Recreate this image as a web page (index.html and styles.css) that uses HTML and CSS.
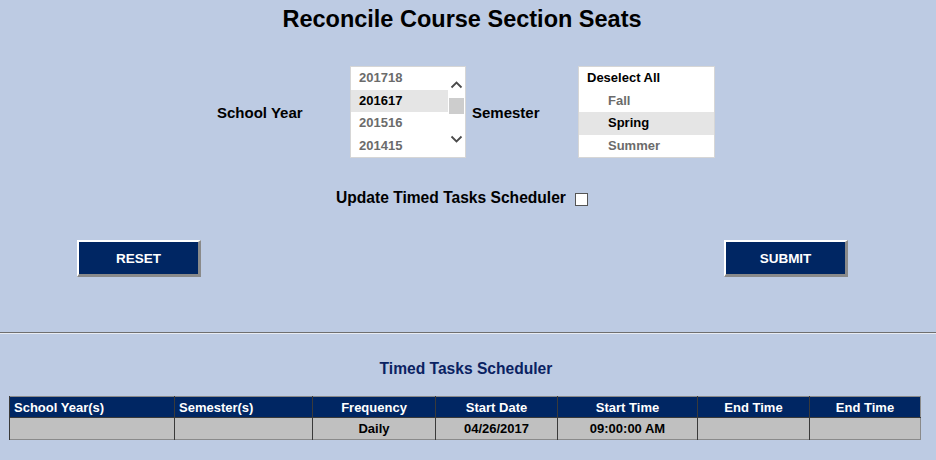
FILE: index.html
```html
<!DOCTYPE html>
<html>
<head>
<meta charset="utf-8">
<title>Reconcile Course Section Seats</title>
<link rel="stylesheet" href="styles.css">
</head>
<body>
<h1 class="title">Reconcile Course Section Seats</h1>

<div class="selectors">
  <div class="sel-label first">School Year</div>
  <div class="listbox years">
    <div class="options">
      <div class="opt">201718</div>
      <div class="opt selected">201617</div>
      <div class="opt">201516</div>
      <div class="opt">201415</div>
    </div>
    <div class="scrollbar">
      <svg class="arrow" width="17" height="12" viewBox="0 0 17 12"><path d="M3.5 8.5 L8.5 3.5 L13.5 8.5" fill="none" stroke="#4a4a4a" stroke-width="1.8"/></svg>
      <div class="track"><div class="thumb"></div></div>
      <svg class="arrow" width="17" height="12" viewBox="0 0 17 12"><path d="M3.5 3.5 L8.5 8.5 L13.5 3.5" fill="none" stroke="#4a4a4a" stroke-width="1.8"/></svg>
    </div>
  </div>
  <div class="sel-label second">Semester</div>
  <div class="listbox semesters">
    <div class="opt dark">Deselect All</div>
    <div class="opt indent">Fall</div>
    <div class="opt indent selected">Spring</div>
    <div class="opt indent">Summer</div>
  </div>
</div>

<div class="check-row">
  <span class="check-label">Update Timed Tasks Scheduler</span>
  <span class="checkbox"></span>
</div>

<div class="buttons">
  <button class="btn">RESET</button>
  <button class="btn">SUBMIT</button>
</div>

<div class="divider"></div>

<h2 class="sched-title">Timed Tasks Scheduler</h2>

<table class="sched">
  <colgroup>
    <col style="width:165px"><col style="width:138px"><col style="width:123px"><col style="width:122px"><col style="width:140px"><col style="width:112px"><col style="width:111px">
  </colgroup>
  <thead>
    <tr>
      <th class="left">School Year(s)</th>
      <th class="left">Semester(s)</th>
      <th>Frequency</th>
      <th>Start Date</th>
      <th>Start Time</th>
      <th>End Time</th>
      <th>End Time</th>
    </tr>
  </thead>
  <tbody>
    <tr>
      <td></td>
      <td></td>
      <td>Daily</td>
      <td>04/26/2017</td>
      <td>09:00:00 AM</td>
      <td></td>
      <td></td>
    </tr>
  </tbody>
</table>
</body>
</html>
```

FILE: styles.css
```css
html, body {
  margin: 0;
  padding: 0;
}
body {
  background: #bdcbe3;
  font-family: "Liberation Sans", Arial, sans-serif;
  color: #000;
  width: 936px;
  height: 460px;
  overflow: hidden;
}
.title {
  margin: 0;
  padding-top: 6px;
  padding-right: 12px;
  height: 30px;
  font-size: 23.5px;
  font-weight: bold;
  text-align: center;
  line-height: 26px;
}
.selectors {
  margin-top: 30px;
  display: flex;
  align-items: center;
  padding-left: 217px;
}
.sel-label {
  font-size: 15px;
  font-weight: bold;
}
.sel-label.first {
  width: 133px;
}
.sel-label.second {
  width: 106px;
  padding-left: 6px;
}
.listbox {
  background: #fff;
  border: 1px solid #d6d6d6;
  height: 90px;
  box-sizing: content-box;
}
.listbox.years {
  width: 114px;
  display: flex;
}
.listbox.semesters {
  width: 135px;
}
.options {
  flex: 1;
}
.opt {
  height: 22.5px;
  line-height: 22.5px;
  font-size: 13px;
  font-weight: bold;
  color: #6b6b6b;
  padding-left: 8px;
}
.opt.selected {
  background: #e5e5e5;
  color: #000;
}
.opt.dark {
  color: #000;
}
.opt.indent {
  padding-left: 29px;
}
.scrollbar {
  width: 17px;
  display: flex;
  flex-direction: column;
  padding-top: 12px;
  padding-bottom: 12px;
}
.arrow {
  display: block;
}
.track {
  flex: 1;
  padding-top: 7px;
}
.thumb {
  margin-left: 1px;
  width: 15px;
  height: 16px;
  background: #cdcdcd;
}
.check-row {
  margin-top: 28px;
  display: flex;
  align-items: center;
  padding-left: 336px;
  height: 24px;
}
.check-label {
  font-size: 15.6px;
  font-weight: bold;
}
.checkbox {
  margin-left: 9px;
  width: 11px;
  height: 11px;
  background: #fff;
  border: 1px solid #555;
  margin-top: 3px;
}
.buttons {
  margin-top: 30px;
  display: flex;
  justify-content: space-between;
  padding: 0 88px 0 77px;
}
.btn {
  width: 124px;
  height: 37px;
  background: #002663;
  color: #fff;
  font-family: "Liberation Sans", Arial, sans-serif;
  font-size: 13.5px;
  font-weight: bold;
  border-style: solid;
  border-width: 2px 3px 3px 2px;
  border-color: #fff #8a8a8a #8a8a8a #fff;
  padding: 0;
  margin: 0;
}
.divider {
  margin-top: 55px;
  height: 1px;
  background: #6f6f6f;
  border-bottom: 1px solid #e8ecf3;
}
.sched-title {
  margin: 0;
  margin-top: 26px;
  padding-right: 4px;
  font-size: 15.6px;
  font-weight: bold;
  color: #0a2262;
  text-align: center;
  line-height: 18px;
}
.sched {
  margin-top: 18px;
  margin-left: 9px;
  width: 911px;
  table-layout: fixed;
  border-collapse: collapse;
  border: 1px solid #8a8a8a;
}
.sched th {
  background: #002663;
  color: #fff;
  font-size: 13px;
  font-weight: bold;
  height: 20px;
  padding: 0 4px;
  text-align: center;
  border-left: 1px solid #3a3a3a;
  border-bottom: 1px solid #3a3a3a;
}
.sched th.left {
  text-align: left;
}
.sched td {
  background: #c0c0c0;
  font-size: 13px;
  font-weight: bold;
  height: 21px;
  padding: 0 4px;
  text-align: center;
  border-left: 1px solid #3a3a3a;
}
```
